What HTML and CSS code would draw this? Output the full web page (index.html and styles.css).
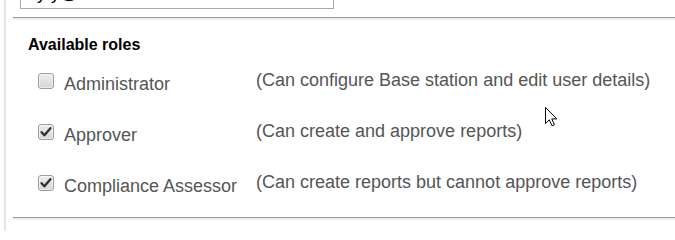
FILE: index.html
```html
<!DOCTYPE html>
<html>
<head>
<meta charset="utf-8">
<link rel="stylesheet" href="styles.css">
</head>
<body>
<div class="page">
  <div class="field"><span class="field-text">yty@home.com</span></div>
  <hr class="rule rule-top">
  <h3 class="heading">Available roles</h3>
  <div class="roles">
    <span class="cb"></span>
    <span class="label">Administrator</span>
    <span class="desc">(Can configure Base station and edit user details)</span>

    <span class="cb checked"><svg viewBox="0 0 16 16" width="16" height="16"><path d="M3.6 8.2 L6.4 11.2 L12.4 4.2" fill="none" stroke="#333" stroke-width="2.4" stroke-linecap="round" stroke-linejoin="round"/></svg></span>
    <span class="label">Approver</span>
    <span class="desc">(Can create and approve reports)</span>

    <span class="cb checked"><svg viewBox="0 0 16 16" width="16" height="16"><path d="M3.6 8.2 L6.4 11.2 L12.4 4.2" fill="none" stroke="#333" stroke-width="2.4" stroke-linecap="round" stroke-linejoin="round"/></svg></span>
    <span class="label">Compliance Assessor</span>
    <span class="desc">(Can create reports but cannot approve reports)</span>
  </div>
  <hr class="rule rule-bottom">
</div>
<svg class="cursor" width="13" height="20" viewBox="0 0 13 20"><path d="M0.5 0.5 L0.5 16.5 L4.3 12.8 L7 18.8 L9.4 17.8 L6.8 11.9 L11.8 11.9 Z" fill="#fff" stroke="#000" stroke-width="1" stroke-linejoin="miter"/></svg>
</body>
</html>
```
FILE: styles.css
```css
html, body {
  margin: 0;
  padding: 0;
  background: #fff;
  font-family: "Liberation Sans", Arial, sans-serif;
}
body {
  padding-left: 4px;
  height: 231px;
  overflow: hidden;
  position: relative;
}
.page {
  border-left: 2px solid #e6e6e6;
  min-height: 231px;
}
.field {
  margin-left: 14px;
  width: 312px;
  height: 8px;
  border: 1px solid #a9a9a9;
  border-top: none;
  overflow: hidden;
}
.field-text {
  display: block;
  font-size: 18px;
  line-height: 18px;
  color: #000;
  margin-top: -16px;
  padding-left: 16px;
  white-space: nowrap;
}
.rule {
  height: 0;
  margin: 0 0 0 7px;
  border: none;
  border-top: 1px solid #9a9a9a;
  border-bottom: 2px solid #eeeeee;
}
.rule-top {
  margin-top: 8px;
}
.heading {
  margin: 15px 0 0 22px;
  font-size: 16px;
  line-height: 20px;
  font-weight: bold;
  color: #000;
}
.roles {
  margin: 14px 0 0 32px;
  display: grid;
  grid-template-columns: 26px 192px 1fr;
  row-gap: 25px;
  align-items: start;
  color: #555;
  font-size: 18px;
  line-height: 22px;
}
.cb {
  margin-top: 4px;
  width: 14px;
  height: 14px;
  border: 1px solid #9c9c9c;
  border-radius: 3px;
  background: linear-gradient(#ededed, #d6d6d6);
  box-shadow: inset 0 0 0 1px rgba(255,255,255,0.5);
  position: relative;
}
.cb svg {
  position: absolute;
  left: -1px;
  top: -1px;
}
.label {
  margin-top: 4px;
  white-space: nowrap;
}
.desc {
  white-space: nowrap;
}
.rule-bottom {
  margin-top: 20px;
}
.cursor {
  position: absolute;
  left: 545px;
  top: 107px;
}
```
